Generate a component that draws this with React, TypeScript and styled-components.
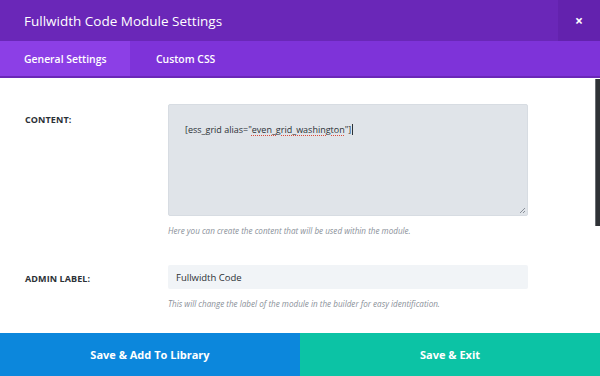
import styled, { createGlobalStyle } from 'styled-components'

const Global = createGlobalStyle`
  html, body {
    margin: 0;
    padding: 0;
    background: #ffffff;
    font-family: "Open Sans", "Liberation Sans", sans-serif;
  }
`

const Modal = styled.div`
  position: relative;
  width: 600px;
  height: 376px;
  display: flex;
  flex-direction: column;
  background: #ffffff;
  overflow: hidden;
`

const Header = styled.div`
  display: flex;
  align-items: center;
  height: 41px;
  background: #6a27b8;
`

const Title = styled.h1`
  flex: 1;
  margin: 0;
  padding-left: 24px;
  font-size: 13.5px;
  font-weight: 400;
  color: #ffffff;
`

const CloseButton = styled.button`
  width: 42px;
  height: 41px;
  border: 0;
  padding: 0;
  background: #6322ae;
  color: #ffffff;
  font-family: "Open Sans", "Liberation Sans", sans-serif;
  font-size: 14px;
  font-weight: 700;
  display: flex;
  align-items: center;
  justify-content: center;
  cursor: pointer;
`

const Tabs = styled.div`
  display: flex;
  height: 35px;
  background: #7e33d9;
  border-bottom: 2px solid #6a27b8;
`

const Tab = styled.div<{ $active?: boolean }>`
  display: flex;
  align-items: center;
  padding-left: ${({ $active }) => ($active ? '24px' : '26px')};
  white-space: nowrap;
  width: ${({ $active }) => ($active ? '130px' : 'auto')};
  box-sizing: border-box;
  background: ${({ $active }) => ($active ? '#8c3fe6' : 'transparent')};
  color: #ffffff;
  font-size: 10.4px;
  font-weight: 600;
`

const Body = styled.div`
  flex: 1;
  display: flex;
  flex-direction: column;
  padding: 26px 72px 0 25px;
`

const Row = styled.div<{ $gap: number }>`
  display: grid;
  grid-template-columns: 143px 1fr;
  margin-bottom: ${({ $gap }) => $gap}px;
`

const Label = styled.div<{ $top: number }>`
  padding-top: ${({ $top }) => $top}px;
  font-size: 9px;
  font-weight: 700;
  color: #2c3136;
  letter-spacing: 0.1px;
`

const Field = styled.div`
  display: flex;
  flex-direction: column;
`

const Textarea = styled.div`
  position: relative;
  height: 112px;
  box-sizing: border-box;
  padding: 18px 16px;
  background: #e0e4e9;
  border: 1px solid #d7dce2;
  border-radius: 2px;
  font-size: 9px;
  color: #2c3136;
`

const Misspelled = styled.span`
  text-decoration: underline dotted #d94b3b;
  text-decoration-thickness: 1px;
  text-underline-offset: 2px;
`

const Caret = styled.span`
  display: inline-block;
  width: 1px;
  height: 11px;
  margin-left: 1px;
  background: #2c3136;
  vertical-align: -2px;
`

const Resize = styled.svg`
  position: absolute;
  right: 1px;
  bottom: 1px;
`

const Input = styled.div`
  height: 24px;
  box-sizing: border-box;
  padding: 0 8px;
  display: flex;
  align-items: center;
  background: #f1f4f7;
  border-radius: 2px;
  font-size: 9.5px;
  color: #2c3136;
`

const Help = styled.div`
  margin-top: 9px;
  font-size: 8.1px;
  font-style: italic;
  color: #8a9099;
`

const Footer = styled.div`
  display: grid;
  grid-template-columns: 1fr 1fr;
  height: 43px;
`

const FooterButton = styled.button<{ $color: string }>`
  border: 0;
  background: ${({ $color }) => $color};
  color: #ffffff;
  font-family: "Open Sans", "Liberation Sans", sans-serif;
  font-size: 11px;
  font-weight: 700;
  cursor: pointer;
`

const Scrollbar = styled.div`
  position: absolute;
  right: 0;
  top: 79px;
  width: 4px;
  height: 147px;
  background: #2f3236;
  border-left: 1px solid #6a6e73;
`

export default function App() {
  return (
    <>
      <Global />
      <Modal>
        <Header>
          <Title>Fullwidth Code Module Settings</Title>
          <CloseButton aria-label="Close">×</CloseButton>
        </Header>
        <Tabs>
          <Tab $active>General Settings</Tab>
          <Tab>Custom CSS</Tab>
        </Tabs>
        <Body>
          <Row $gap={29}>
            <Label $top={9}>CONTENT:</Label>
            <Field>
              <Textarea>
                [ess_grid alias="<Misspelled>even_grid_washington</Misspelled>"]<Caret />
                <Resize width="8" height="8" viewBox="0 0 8 8">
                  <path d="M7 2 L2 7 M7 5 L5 7" stroke="#8a9099" strokeWidth="1" />
                </Resize>
              </Textarea>
              <Help>Here you can create the content that will be used within the module.</Help>
            </Field>
          </Row>
          <Row $gap={0}>
            <Label $top={7}>ADMIN LABEL:</Label>
            <Field>
              <Input>Fullwidth Code</Input>
              <Help>This will change the label of the module in the builder for easy identification.</Help>
            </Field>
          </Row>
        </Body>
        <Footer>
          <FooterButton $color="#0c87dc">Save &amp; Add To Library</FooterButton>
          <FooterButton $color="#0cc3a5">Save &amp; Exit</FooterButton>
        </Footer>
        <Scrollbar />
      </Modal>
    </>
  )
}
